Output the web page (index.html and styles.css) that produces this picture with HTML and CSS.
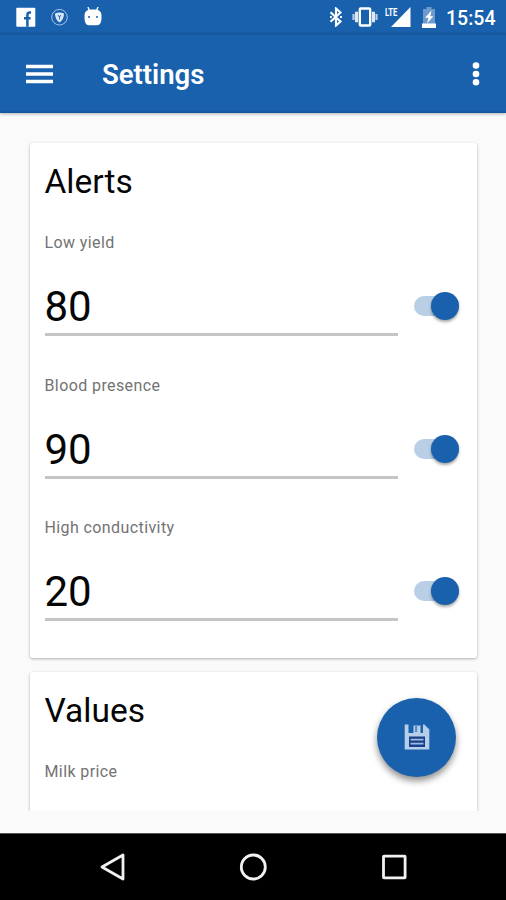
FILE: index.html
```html
<!DOCTYPE html>
<html lang="en">
<head>
<meta charset="utf-8">
<title>Settings</title>
<link rel="stylesheet" href="styles.css">
</head>
<body>
<div class="screen">
  <div class="status-bar">
    <div class="notifications">
      <svg width="20" height="20" viewBox="0 0 20 20"><rect x=".3" y=".7" width="19" height="19" rx=".8" fill="#fff"/><path d="M15 5.500h-1.200Q11.400 5.500 11.400 8V19.700M8 11.200h6.600" fill="none" stroke="#1961ad" stroke-width="2.500"/></svg>
      <svg width="18" height="18" viewBox="0 0 18 18"><circle cx="9.500" cy="9.200" r="7.800" fill="none" stroke="#a9c4e4" stroke-width="1"/><path d="M5 5.500Q9.500 3.500 14 5.500Q14 11.500 9.500 14.500Q5 11.500 5 5.500z" fill="#d9e6f4"/><path d="M9.500 11.500V8M8 7l1.500 2L11 7" fill="none" stroke="#1961ad" stroke-width=".9"/></svg>
      <svg width="20" height="20" viewBox="0 0 20 20"><path d="M5 0l1.500 4M15 0l-1.500 4" stroke="#fff" stroke-width="1.400"/><path d="M1.500 8Q2 2.500 8 2.500h4Q18 2.500 18.500 8Q19 18.300 14 18.300H6Q1 18.300 1.500 8z" fill="#fff"/><circle cx="6" cy="10" r="1" fill="#1961ad"/><circle cx="14" cy="10" r="1" fill="#1961ad"/></svg>
    </div>
    <div class="indicators">
      <svg class="bluetooth" width="14" height="20" viewBox="0 0 14 20"><path d="M1.500 5.200L11.500 14.500 7 18.500V1.500L11.500 5.500 1.500 14.800" fill="none" stroke="#fff" stroke-width="2.100"/><path d="M1 10h1.800M11 10h2" stroke="#fff" stroke-width="2"/></svg>
      <svg class="vibrate" width="26" height="20" viewBox="0 0 26 20"><rect x="7.800" y="1.500" width="10.400" height="17" rx="1" fill="none" stroke="#fff" stroke-width="2.400"/><path d="M4.500 4.800v10.400M21.500 4.800v10.400" stroke="#dce8f5" stroke-width="3"/><path d="M1.500 7v6M24.500 7v6" stroke="#b8cfe8" stroke-width="2.200"/></svg>
      <span class="signal"><span class="lte">LTE</span><svg width="20" height="20" viewBox="0 0 20 20"><path d="M19.500 0v20H0z" fill="#fff"/></svg></span>
      <svg class="battery" width="14" height="21" viewBox="0 0 14 21"><path d="M4.500 0h5v2H13v15H1V2h3.500z" fill="#6d9bce"/><path d="M0 16.500h14V21H0z" fill="#fff"/><path d="M9.500 3.500L3 10.800h3.500L5 16.500 11.300 9.200H8.300z" fill="#fff"/></svg>
      <span class="clock">15:54</span>
    </div>
  </div>
  <header class="app-bar">
    <svg class="menu" width="27" height="20" viewBox="0 0 27 20"><path d="M0 2.500h27M0 10h27M0 17.500h27" stroke="#fff" stroke-width="3.300"/></svg>
    <h1>Settings</h1>
    <svg class="more" width="8" height="24" viewBox="0 0 8 24"><g fill="#fff"><circle cx="4" cy="3.500" r="3.300"/><circle cx="4" cy="12" r="3.300"/><circle cx="4" cy="20.300" r="3.300"/></g></svg>
  </header>
  <main class="content">
    <section class="card alerts">
      <h2>Alerts</h2>
      <div class="setting">
        <div class="label">Low yield</div>
        <div class="row"><div class="value">80</div><div class="switch"><span class="thumb"></span></div></div>
      </div>
      <div class="setting">
        <div class="label">Blood presence</div>
        <div class="row"><div class="value">90</div><div class="switch"><span class="thumb"></span></div></div>
      </div>
      <div class="setting">
        <div class="label">High conductivity</div>
        <div class="row"><div class="value">20</div><div class="switch"><span class="thumb"></span></div></div>
      </div>
    </section>
    <section class="card values">
      <h2>Values</h2>
      <div class="setting"><div class="label">Milk price</div></div>
    </section>
  </main>
  <button class="fab" aria-label="Save">
    <svg width="26" height="26" viewBox="0 0 26 26"><path d="M.7.500h19.600l5 5v20H.7z" fill="#b6cfe9"/><path d="M4.500 0h14.500v9H4.500z" fill="#1961ad"/><path d="M9.500 1.500h7V9h-7z" fill="#b6cfe9"/><path d="M11 2h2.200v6H11z" fill="#5f89c0"/><path d="M5 12.500h16V23H5z" fill="#173f8c"/><path d="M6.500 15.700h13M6.500 19.700h13" stroke="#9fb9dd" stroke-width="1.800"/></svg>
  </button>
  <nav class="nav-bar">
    <svg width="28" height="30" viewBox="0 0 28 30"><path d="M3 15L24 3v24z" fill="none" stroke="#f2f2f2" stroke-width="2.800" stroke-linejoin="round"/></svg>
    <svg width="28" height="30" viewBox="0 0 28 30"><circle cx="14.300" cy="15" r="12" fill="none" stroke="#f2f2f2" stroke-width="2.800"/></svg>
    <svg width="28" height="30" viewBox="0 0 28 30"><rect x="3.500" y="4.200" width="21.600" height="21.600" rx=".5" fill="none" stroke="#f2f2f2" stroke-width="2.800"/></svg>
  </nav>
</div>
</body>
</html>
```
FILE: styles.css
```css
* { box-sizing: border-box; }
body { margin: 0; font-family: Roboto, sans-serif; }
svg { display: block; flex: none; }
h1, h2 { margin: 0; }

.screen {
  position: relative;
  display: flex;
  flex-direction: column;
  width: 506px;
  height: 900px;
  overflow: hidden;
  background: #fafafa;
}

.status-bar {
  display: flex;
  justify-content: space-between;
  height: 33px;
  padding: 7px 10px 0 16px;
  background: #1961ad;
}
.notifications { display: flex; gap: 14px; height: 20px; align-items: center; }
.notifications svg:last-child { margin-left: 1px; }
.indicators { display: flex; }
.bluetooth { margin-right: 9px; }
.vibrate { margin-right: 7px; }
.signal { position: relative; width: 26px; padding-left: 6px; margin-right: 11px; }
.lte {
  position: absolute;
  left: 0;
  top: 0;
  color: #fff;
  font: 700 11px/11px Roboto, sans-serif;
  transform: scaleX(.7);
  transform-origin: left;
}
.battery { margin-right: 10px; }
.clock {
  width: 50px;
  color: #fff;
  font-size: 19.5px;
  font-weight: 500;
  line-height: 23px;
  white-space: nowrap;
}

.app-bar {
  position: relative;
  z-index: 1;
  display: flex;
  align-items: center;
  height: 80px;
  padding: 0 26px 3px 26px;
  background: linear-gradient(#17549a, #1961ad 3px, #1961ad 77px, #175397);
  box-shadow: 0 1px 3px rgba(0, 0, 0, .3);
}
.app-bar h1 {
  flex: 1;
  margin-left: 49px;
  padding-top: 6px;
  color: #fff;
  font-size: 27.5px;
  font-weight: 600;
  line-height: 32px;
}
.menu { margin-top: 4px; }
.more { margin-top: 4px; }

.content {
  height: 698px;
  padding: 30px 29px 0 30px;
  overflow: hidden;
}
.card {
  padding: 19px 15.5px 0 14.5px;
  border-radius: 3px;
  background: #fff;
  box-shadow: 0 1px 3px rgba(0, 0, 0, .3);
}
.alerts { height: 515px; }
.values { height: 200px; margin-top: 14px; }
.card h2 {
  font-size: 33.5px;
  font-weight: 400;
  line-height: 40px;
  color: #050505;
  margin-bottom: 31px;
}
.setting { margin-bottom: 39.5px; }
.label {
  color: #737373;
  font-size: 16px;
  letter-spacing: .4px;
  line-height: 20px;
  margin-bottom: 32px;
}
.row { display: flex; height: 51px; padding-right: 3px; }
.value {
  flex: 1;
  border-bottom: 3px solid #c5c5c5;
  color: #050505;
  font-size: 42px;
  line-height: 44px;
}
.switch {
  display: flex;
  justify-content: flex-end;
  align-items: center;
  width: 45px;
  height: 20px;
  margin: 11px 0 0 16px;
  border-radius: 10px;
  background: #b9cfe6;
}
.thumb {
  flex: none;
  width: 28px;
  height: 28px;
  border-radius: 50%;
  background: #1961ad;
  box-shadow: 0 2px 3px rgba(0, 0, 0, .35);
}

.fab {
  position: absolute;
  z-index: 2;
  left: 377px;
  top: 698px;
  display: flex;
  align-items: center;
  justify-content: center;
  width: 79px;
  height: 79px;
  padding: 0 0 1px;
  border: 0;
  border-radius: 50%;
  background: #1961ad;
  box-shadow: 0 4px 7px rgba(0, 0, 0, .45);
}

.nav-bar {
  display: flex;
  justify-content: center;
  gap: 112.500px;
  height: 67px;
  margin-top: auto;
  padding-top: 18px;
  background: #000;
  border-top: 1px solid #555;
}
```
